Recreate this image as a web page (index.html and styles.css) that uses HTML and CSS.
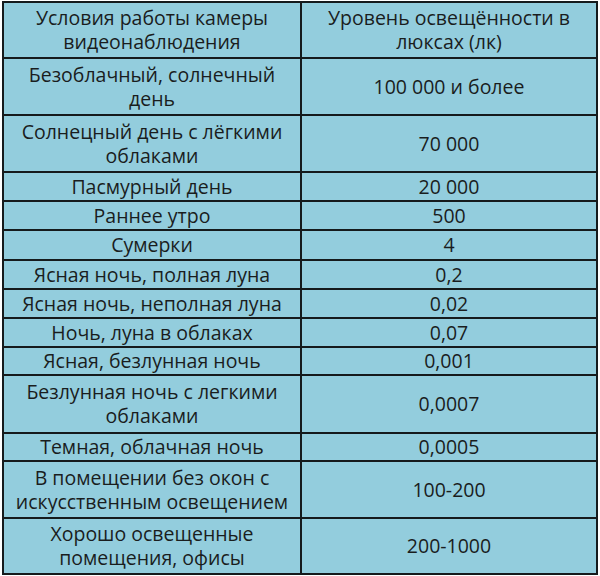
FILE: index.html
```html
<!DOCTYPE html>
<html lang="ru">
<head>
<meta charset="utf-8">
<link rel="stylesheet" href="styles.css">
</head>
<body>
<div class="lux-table">
  <div class="cell">Условия работы камеры<br>видеонаблюдения</div>
  <div class="cell">Уровень освещённости в<br>люксах (лк)</div>
  <div class="cell">Безоблачный, солнечный<br>день</div>
  <div class="cell">100 000 и более</div>
  <div class="cell">Солнецный день с лёгкими<br>облаками</div>
  <div class="cell">70 000</div>
  <div class="cell">Пасмурный день</div>
  <div class="cell">20 000</div>
  <div class="cell">Раннее утро</div>
  <div class="cell">500</div>
  <div class="cell">Сумерки</div>
  <div class="cell">4</div>
  <div class="cell">Ясная ночь, полная луна</div>
  <div class="cell">0,2</div>
  <div class="cell">Ясная ночь, неполная луна</div>
  <div class="cell">0,02</div>
  <div class="cell">Ночь, луна в облаках</div>
  <div class="cell">0,07</div>
  <div class="cell">Ясная, безлунная ночь</div>
  <div class="cell">0,001</div>
  <div class="cell">Безлунная ночь с легкими<br>облаками</div>
  <div class="cell">0,0007</div>
  <div class="cell">Темная, облачная ночь</div>
  <div class="cell">0,0005</div>
  <div class="cell">В помещении без окон с<br>искусственным освещением</div>
  <div class="cell">100-200</div>
  <div class="cell">Хорошо освещенные<br>помещения, офисы</div>
  <div class="cell">200-1000</div>
</div>
</body>
</html>
```
FILE: styles.css
```css
html, body {
  margin: 0;
  padding: 0;
  background: #ffffff;
}
.lux-table {
  margin: 1px 0 0 2px;
  width: 596px;
  box-sizing: border-box;
  padding: 2px;
  gap: 2px;
  background: #151a1c;
  display: grid;
  grid-template-columns: 296px 294px;
  grid-template-rows: 54px 55px 55px 27px 27px 28px 27px 27px 27px 26px 56px 26px 55px 54px;
  font-family: "Open Sans", "Liberation Sans", sans-serif;
  font-size: 19.5px;
  line-height: 24px;
  color: #1a1d1e;
}
.cell {
  background: #93cddd;
  display: flex;
  align-items: center;
  justify-content: center;
  text-align: center;
}
```
